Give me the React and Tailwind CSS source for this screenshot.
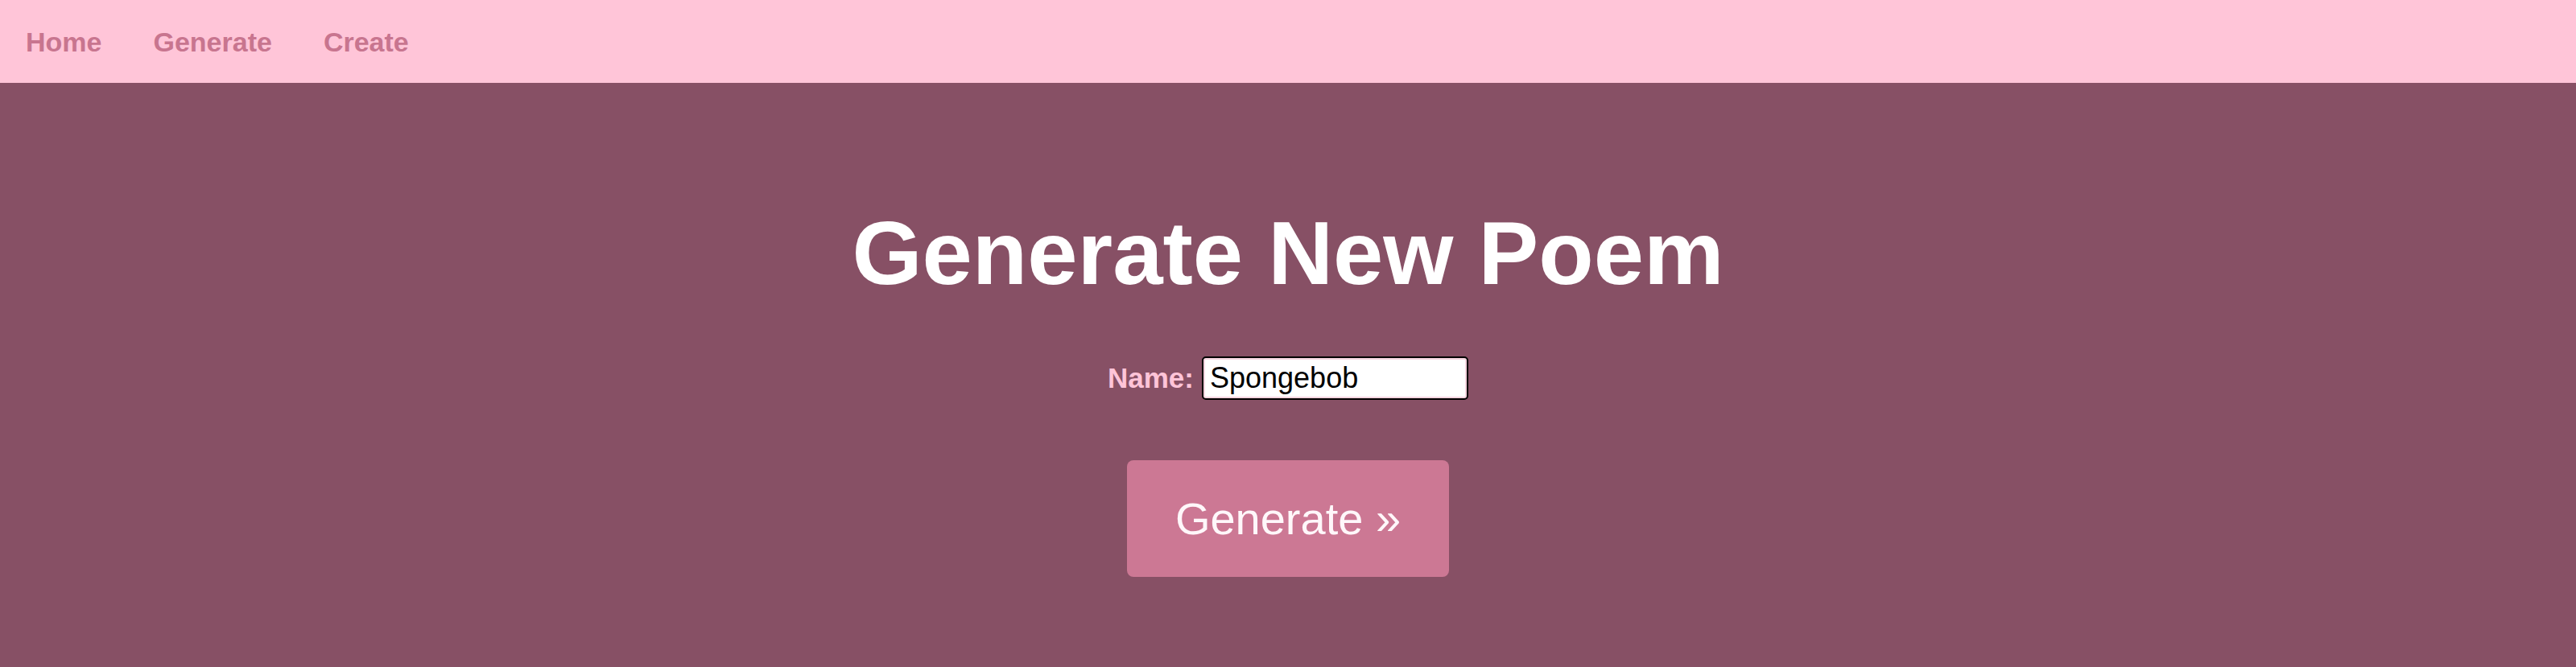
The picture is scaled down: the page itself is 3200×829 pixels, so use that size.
import { useState } from 'react'

export default function App() {
  const [name, setName] = useState('Spongebob')

  return (
    <div className="min-h-screen bg-[#875065] font-['Liberation_Sans',Arial,sans-serif]">
      {/* Top nav */}
      <nav className="h-[103px] bg-[#ffc5d8] flex items-center">
        <a href="#" className="px-8 text-[34px] font-bold text-[#c8758f] leading-none">Home</a>
        <a href="#" className="px-8 text-[34px] font-bold text-[#c8758f] leading-none">Generate</a>
        <a href="#" className="px-8 text-[34px] font-bold text-[#c8758f] leading-none">Create</a>
      </nav>

      <main className="flex flex-col items-center">
        <h1 className="mt-[156px] text-[112px] leading-none font-bold text-white">Generate New Poem</h1>

        <form className="flex flex-col items-center" onSubmit={e => e.preventDefault()}>
          <div className="mt-[72px] flex items-center gap-[10px]">
            <label className="text-[35px] font-bold text-[#ffc4d8]">Name:</label>
            <input
              type="text"
              value={name}
              onChange={e => setName(e.target.value)}
              className="w-[331px] h-[54px] px-[8px] bg-white text-black text-[36px] border-2 border-black rounded-[5px] shadow-[inset_0_0_0_2px_#f7d5e0] outline-none"
            />
          </div>

          <button
            type="submit"
            className="mt-[75px] w-[400px] h-[145px] rounded-[8px] bg-[#cc7894] text-[56px] text-[#fff7fa] flex items-center justify-center"
          >
            Generate »
          </button>
        </form>
      </main>
    </div>
  )
}
